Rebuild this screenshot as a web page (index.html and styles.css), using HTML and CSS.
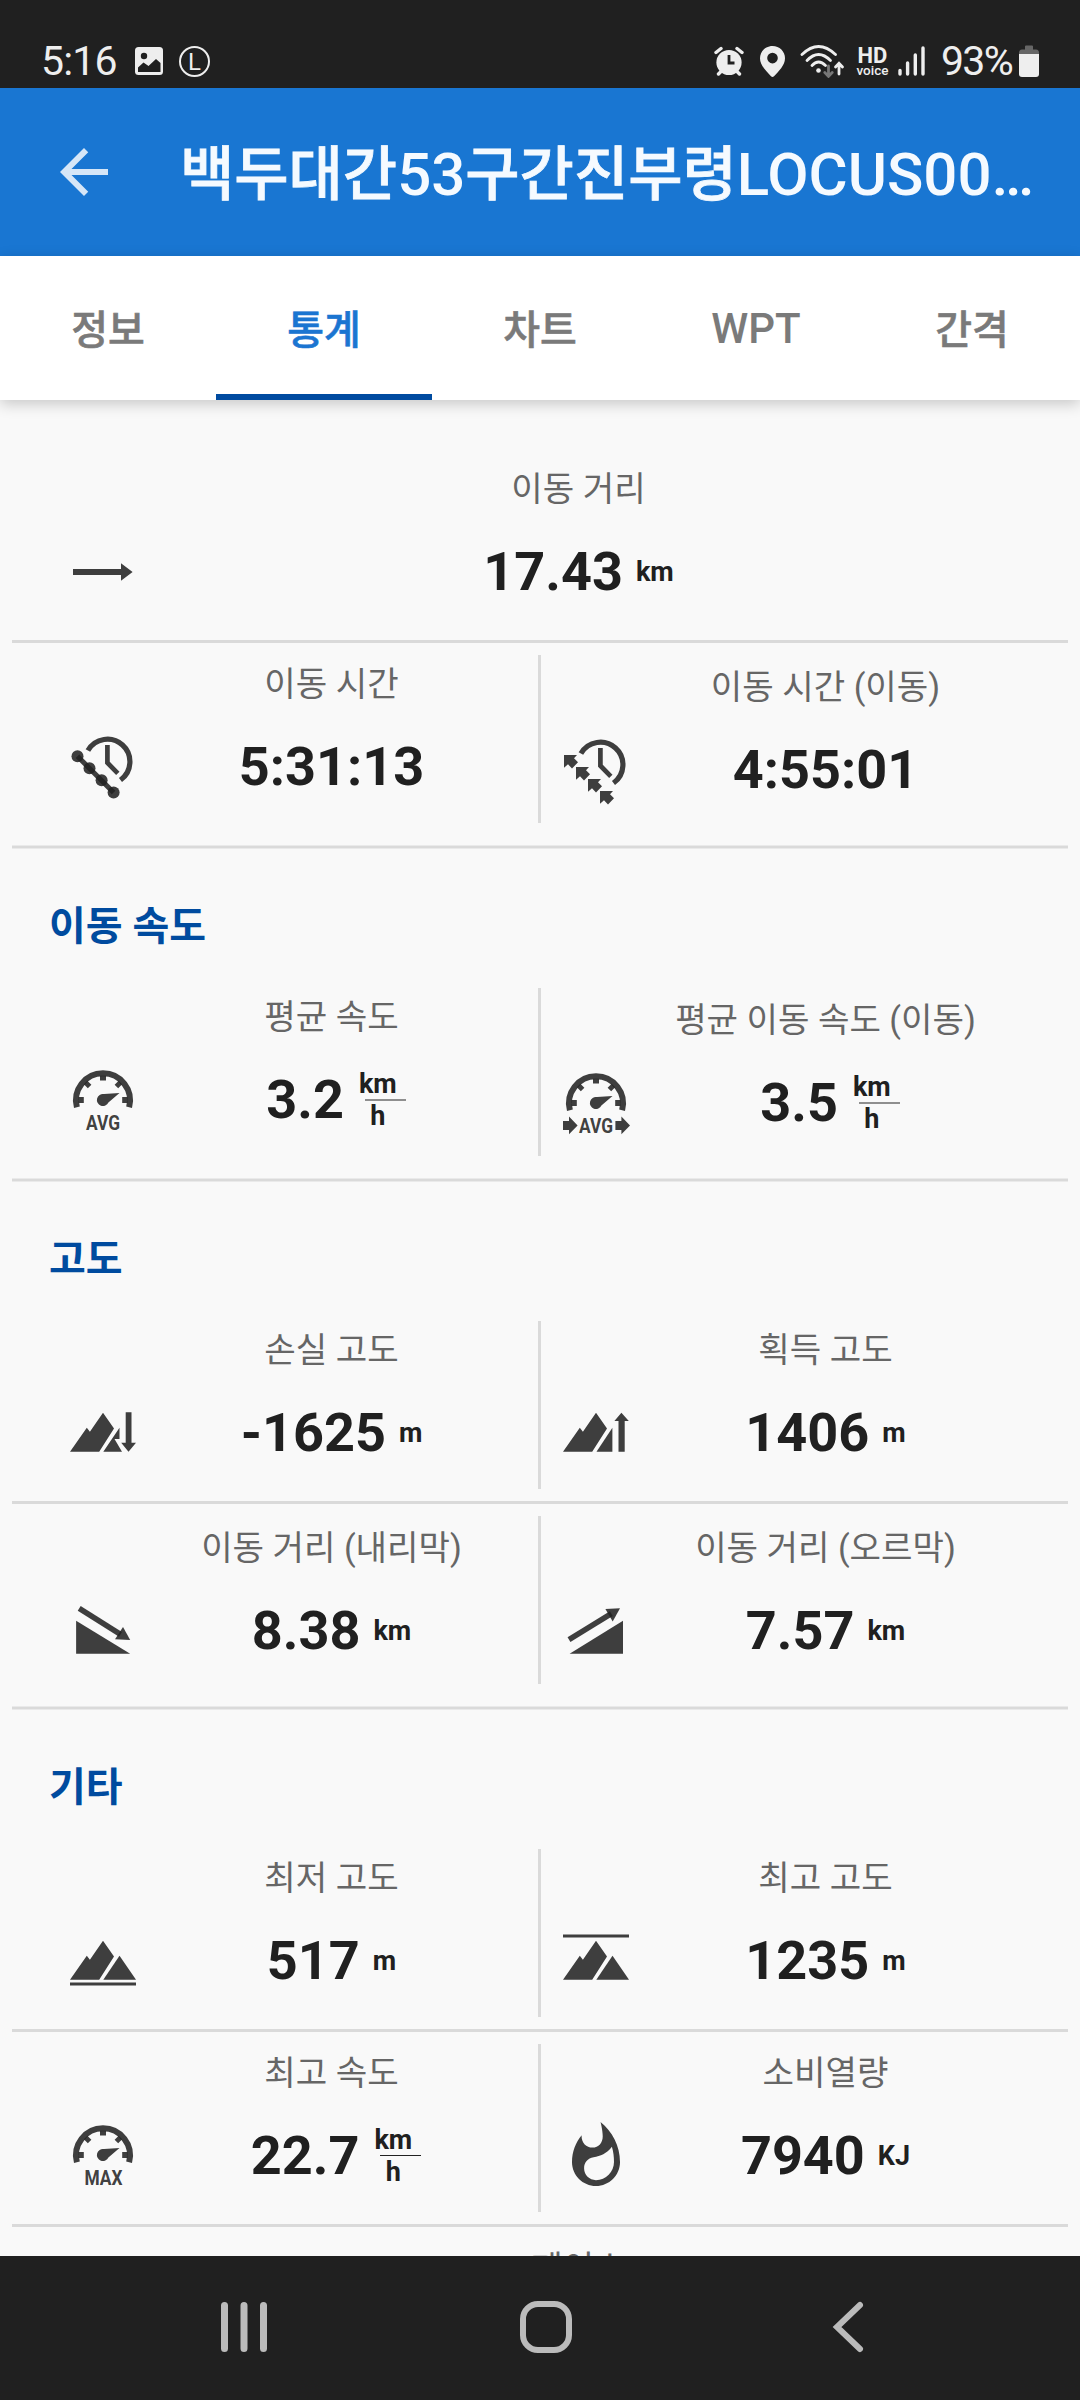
FILE: index.html
```html
<!DOCTYPE html>
<html lang="ko">
<head>
    <meta charset="UTF-8">
    <meta name="viewport" content="width=device-width, initial-scale=1.0">
    <title>통계</title>
    <link rel="stylesheet" href="styles.css">
</head>
<body>
    <!-- 공통 아이콘 -->
    <svg class="defs" width="0" height="0">
        <defs>
            <g id="clock">
                <path class="line" stroke-width="5.2" d="M20.9 19.5A22.5 22.5 0 1 1 53.5 49"/>
                <path class="line" stroke-width="4.7" d="M40.4 14V31.7L50.8 42.4"/>
            </g>
            <g id="gauge">
                <path class="line" stroke-width="6" d="M9.9 43.2A27 27 0 1 1 62.1 43.2"/>
                <path d="M33 11.8h6v4.8h-6zM11.6 33h5.2v6h-5.2zM55.2 33h5.2v6h-5.2z"/>
                <path class="line" stroke-width="5" d="M18.6 18.6L22.6 22.6M53.4 18.6L49.4 22.6"/>
                <path d="M52.5 29L41.4 38.4A6 6 0 1 1 37 30.1z"/>
            </g>
            <path id="peak" d="M3 54.7L19.8 30.7L22.9 34.7L36 15.7L47 31.4L32.2 54.7z"/>
            <path id="tip" d="M4 21H17L14 24.3L18 28.3L12 34.5L8 30.3L4 33.7z"/>
            <path id="arrow" d="M0 54h6v-4.4l8.6 8.8L6 67.2V63H0z"/>
        </defs>
    </svg>

    <header class="status">
        <div class="status-left">
            <span class="time">5:16</span>
            <svg class="ic-photo" width="28" height="28" viewBox="0 0 28 28"><rect width="28" height="28" rx="3.5" fill="#eee"/><circle cx="9" cy="9" r="3.2" fill="#202020"/><path d="M3 20.5L8.5 15.5L13.5 19L21 12L25.5 16V25H3z" fill="#202020"/></svg>
            <span class="ic-l">L</span>
        </div>
        <div class="status-right">
            <svg class="ic-alarm" width="30" height="30" viewBox="0 0 30 30"><circle cx="15" cy="16.5" r="12.6" fill="#eee"/><path d="M2 6.500L7 2.500M28 6.500L23 2.500M4.500 28L7.500 25M25.500 28L22.500 25" stroke="#eee" stroke-width="3.4" stroke-linecap="round"/><path d="M15 9V17H20.5" fill="none" stroke="#202020" stroke-width="2.8"/></svg>
            <svg class="ic-pin" width="25" height="31" viewBox="0 0 25 31"><path fill="#eee" fill-rule="evenodd" d="M12.5 0C5.5 0 0 5.5 0 12.3C0 19.5 6.5 25.5 11 30.3Q12.5 31.5 14 30.3C18.5 25.5 25 19.5 25 12.3C25 5.5 19.5 0 12.5 0zM12.5 6.8a5.3 5.3 0 1 1 0 10.6a5.3 5.3 0 1 1 0-10.6z"/></svg>
            <svg class="ic-wifi" width="46" height="34" viewBox="0 0 46 34"><g fill="none" stroke="#eee" stroke-width="2.8" stroke-linecap="round"><path d="M2 10.5Q18.5-5.5 35.5 10.5"/><path d="M7 16.5Q18.5 4.5 30.5 16.5"/><path d="M12 21.5Q18.5 14.5 25.5 21.5"/><path d="M39 30V20M35.5 23L39 19.2L42.5 23"/><path stroke="#777" d="M28.5 22V32M24.8 28.6L28.5 32.4L32.2 28.6"/></g><circle cx="18.5" cy="26.5" r="2.3" fill="#eee"/></svg>
            <span class="hd"><b>HD</b><small>voice</small></span>
            <svg class="ic-signal" width="28" height="30" viewBox="0 0 28 30"><path d="M2 24.5V28M9.6 17V28M17.3 9V28M25 2V28" stroke="#eee" stroke-width="3.4" stroke-linecap="round"/></svg>
            <span class="battery-text">93%</span>
            <svg class="ic-battery" width="20" height="33" viewBox="0 0 20 33"><path fill="#666" d="M6 1.5Q6 .5 7 .5H13Q14 .5 14 1.5V4.500H17Q20 4.500 20 8V12H0V8Q0 4.500 3 4.500H6z"/><path fill="#eee" d="M0 9H20V29Q20 32 17 32H3Q0 32 0 29z"/></svg>
        </div>
    </header>

    <div class="appbar">
        <svg class="back" width="72" height="72" viewBox="0 0 24 24"><path fill="#d6e6f7" d="M20 11H7.83l5.59-5.59L12 4l-8 8 8 8 1.41-1.41L7.83 13H20v-2z"/></svg>
        <h1><span>백두대간</span>53<span>구간진부령</span>LOCUS00…</h1>
    </div>

    <nav class="tabs">
        <a class="tab">정보</a>
        <a class="tab active">통계</a>
        <a class="tab">차트</a>
        <a class="tab latin">WPT</a>
        <a class="tab">간격</a>
    </nav>

    <main class="content">
        <div class="row">
            <div class="cell">
                <svg class="icon" viewBox="0 0 72 72"><path d="M6 33H54V27.3L65.6 36L54 44.7V39H6z"/></svg>
                <div class="stat">
                    <div class="label">이동 거리</div>
                    <div class="value">17.43<span class="unit">km</span></div>
                </div>
            </div>
        </div>
        <div class="divider"></div>
        <div class="row">
            <div class="cell">
                <svg class="icon" viewBox="0 0 72 72"><use href="#clock"/><circle cx="10.5" cy="25.3" r="6"/><circle cx="22.5" cy="37.3" r="6"/><circle cx="34.6" cy="49.3" r="6"/><circle cx="46.6" cy="61.5" r="6"/><path class="line" stroke-width="5" d="M10.5 25.3L46.6 61.5"/></svg>
                <div class="stat">
                    <div class="label">이동 시간</div>
                    <div class="value">5:31:13</div>
                </div>
            </div>
            <div class="split"></div>
            <div class="cell low">
                <svg class="icon" viewBox="0 0 72 72"><use href="#clock"/><use href="#tip"/><use href="#tip" x="12" y="12"/><use href="#tip" x="24" y="24"/><use href="#tip" x="36" y="36"/></svg>
                <div class="stat">
                    <div class="label">이동 시간 (이동)</div>
                    <div class="value">4:55:01</div>
                </div>
            </div>
        </div>
        <div class="divider section-end"></div>

        <h2>이동 속도</h2>
        <div class="row">
            <div class="cell">
                <svg class="icon" viewBox="0 0 72 72"><use href="#gauge"/><text x="19" y="66" textLength="34" lengthAdjust="spacingAndGlyphs">AVG</text></svg>
                <div class="stat">
                    <div class="label">평균 속도</div>
                    <div class="value">3.2<span class="unit frac"><span>km</span><span>h</span></span></div>
                </div>
            </div>
            <div class="split"></div>
            <div class="cell low">
                <svg class="icon" viewBox="0 0 72 72"><use href="#gauge"/><text x="19" y="66" textLength="34" lengthAdjust="spacingAndGlyphs">AVG</text><use href="#arrow" x="3"/><use href="#arrow" x="55.4"/></svg>
                <div class="stat">
                    <div class="label">평균 이동 속도 (이동)</div>
                    <div class="value">3.5<span class="unit frac"><span>km</span><span>h</span></span></div>
                </div>
            </div>
        </div>
        <div class="divider section-end"></div>

        <h2>고도</h2>
        <div class="row">
            <div class="cell">
                <svg class="icon" viewBox="0 0 72 72"><use href="#peak"/><path d="M36.3 54.7L52.5 30.7V42H47.5L55 54.7z"/><path d="M58.7 15.3H64.5V45.7H69L61.5 54.7L54.2 45.7H58.7z"/></svg>
                <div class="stat">
                    <div class="label">손실 고도</div>
                    <div class="value">-1625<span class="unit">m</span></div>
                </div>
            </div>
            <div class="split"></div>
            <div class="cell">
                <svg class="icon" viewBox="0 0 72 72"><use href="#peak"/><path d="M36.5 54.7L52.4 30.7V54.7z"/><path d="M58.5 54.7V24H54.4L61.4 15.7L68.8 24H64.7V54.7z"/></svg>
                <div class="stat">
                    <div class="label">획득 고도</div>
                    <div class="value">1406<span class="unit">m</span></div>
                </div>
            </div>
        </div>
        <div class="divider"></div>
        <div class="row">
            <div class="cell low">
                <svg class="icon" viewBox="0 0 72 72"><path d="M9.1 25.7V58.7H63.2z"/><path class="line" stroke-width="5.5" d="M12.2 13.3L53.5 39.3"/><path d="M56 32L63.2 45L48 44.3z"/></svg>
                <div class="stat">
                    <div class="label">이동 거리 (내리막)</div>
                    <div class="value">8.38<span class="unit">km</span></div>
                </div>
            </div>
            <div class="split"></div>
            <div class="cell low">
                <svg class="icon" viewBox="0 0 72 72"><path d="M63 25.7V58.7H9.6z"/><path class="line" stroke-width="5.5" d="M9 44.7L51.3 18.7"/><path d="M60 13.3L45.4 14L52.7 26.5z"/></svg>
                <div class="stat">
                    <div class="label">이동 거리 (오르막)</div>
                    <div class="value">7.57<span class="unit">km</span></div>
                </div>
            </div>
        </div>
        <div class="divider section-end"></div>

        <h2>기타</h2>
        <div class="row">
            <div class="cell">
                <svg class="icon" viewBox="0 0 72 72"><use href="#peak"/><path d="M36.3 54.7L52.5 30.7L69 54.7z"/><path d="M3 57.6H69V60.6H3z"/></svg>
                <div class="stat">
                    <div class="label">최저 고도</div>
                    <div class="value">517<span class="unit">m</span></div>
                </div>
            </div>
            <div class="split"></div>
            <div class="cell">
                <svg class="icon" viewBox="0 0 72 72"><use href="#peak"/><path d="M36.3 54.7L52.5 30.7L69 54.7z"/><path d="M3 9.5H69V12.5H3z"/></svg>
                <div class="stat">
                    <div class="label">최고 고도</div>
                    <div class="value">1235<span class="unit">m</span></div>
                </div>
            </div>
        </div>
        <div class="divider"></div>
        <div class="row">
            <div class="cell">
                <svg class="icon" viewBox="0 0 72 72"><use href="#gauge" y="-1"/><text x="17.4" y="65" textLength="38" lengthAdjust="spacingAndGlyphs">MAX</text></svg>
                <div class="stat">
                    <div class="label">최고 속도</div>
                    <div class="value">22.7<span class="unit frac thin"><span>km</span><span>h</span></span></div>
                </div>
            </div>
            <div class="split"></div>
            <div class="cell">
                <svg class="icon" viewBox="0 0 24 24"><path fill-rule="evenodd" d="M13.5.67s.74 2.65.74 4.8c0 2.06-1.35 3.73-3.41 3.73-2.07 0-3.63-1.67-3.63-3.73l.03-.36C5.21 7.51 4 10.62 4 14c0 4.42 3.58 8 8 8s8-3.58 8-8C20 8.61 17.41 3.8 13.5.67zM17.3 8.9C17.8 10.5 18 12.2 18 14C18 17.3 15.3 20.05 12 20.05C9.8 20.05 8.03 18.3 8.03 16.1C8.03 14 9.2 12.8 11.2 12.4C13.5 12 15.5 11.2 17.3 8.9z"/></svg>
                <div class="stat">
                    <div class="label">소비열량</div>
                    <div class="value">7940<span class="unit">KJ</span></div>
                </div>
            </div>
        </div>
        <div class="divider"></div>
        <div class="row">
            <div class="cell">
                <div class="icon"></div>
                <div class="stat">
                    <div class="label">페이스</div>
                </div>
            </div>
        </div>
    </main>

    <footer class="navbar">
        <svg width="50" height="54" viewBox="0 0 50 54"><path d="M5.5 5.5V48.5M25 5.5V48.5M44.5 5.5V48.5" stroke="#bbb" stroke-width="7" stroke-linecap="round"/></svg>
        <svg width="54" height="54" viewBox="0 0 54 54"><rect x="4" y="4" width="46" height="46" rx="15" fill="none" stroke="#bbb" stroke-width="6"/></svg>
        <svg width="54" height="54" viewBox="0 0 54 54"><path d="M39 5L16 27L39 49" fill="none" stroke="#bbb" stroke-width="6" stroke-linecap="round"/></svg>
    </footer>
</body>
</html>
```

FILE: styles.css
```css
html, body {
    height: 100%;
    margin: 0;
    padding: 0;
}
body {
    width: 1080px;
    height: 2400px;
    display: flex;
    flex-direction: column;
    overflow: hidden;
    background-color: #f9f9f9;
    font-family: Roboto, "Noto Sans CJK KR", sans-serif;
    color: #202020;
}
.defs {
    position: absolute;
}

/* 상태 표시줄 */
.status {
    flex: none;
    height: 88px;
    box-sizing: border-box;
    padding: 34px 41px 0 41px;
    display: flex;
    justify-content: space-between;
    background-color: #202020;
    color: #eee;
}
.status-left, .status-right {
    display: flex;
    align-items: center;
    height: 54px;
}
.time, .battery-text {
    font-size: 41px;
    line-height: 54px;
    letter-spacing: -0.8px;
}
.ic-photo {
    margin-left: 18px;
}
.ic-l {
    width: 31px;
    height: 31px;
    box-sizing: border-box;
    margin-left: 16px;
    border: 2px solid #eee;
    border-radius: 50%;
    font-size: 24px;
    line-height: 28px;
    text-align: center;
}
.ic-pin {
    margin-left: 16px;
}
.ic-wifi {
    margin-left: 15px;
}
.hd {
    display: flex;
    flex-direction: column;
    align-items: center;
    width: 33px;
    margin-left: 10px;
}
.hd b {
    font-size: 22px;
    font-weight: 700;
    line-height: 17px;
}
.hd small {
    font-size: 13.5px;
    font-weight: 500;
    line-height: 12px;
}
.ic-signal {
    margin-left: 9px;
}
.battery-text {
    margin-left: 15px;
    letter-spacing: -1.7px;
}
.ic-battery {
    margin-left: 7px;
}

/* 앱바 */
.appbar {
    flex: none;
    height: 168px;
    display: flex;
    align-items: center;
    padding-left: 48px;
    background-color: #1976d2;
}
.appbar h1 {
    margin: 0;
    padding: 5px 0 0 60px;
    font-size: 60px;
    font-weight: 500;
    line-height: 84px;
    white-space: nowrap;
    color: #f5faff;
}
.appbar h1 span {
    font-size: 59px;
    -webkit-text-stroke: 0.8px #f5faff;
}

/* 탭 */
.tabs {
    flex: none;
    position: relative;
    z-index: 1;
    display: flex;
    height: 144px;
    background-color: #fff;
    box-shadow: 0 4px 14px rgba(0, 0, 0, 0.2);
}
.tab {
    flex: 1;
    box-sizing: border-box;
    border-bottom: 6px solid transparent;
    font-size: 40px;
    font-weight: 500;
    line-height: 149px;
    text-align: center;
    color: #7a7a7a;
    -webkit-text-stroke: 0.6px;
}
.tab.latin {
    font-size: 42px;
    line-height: 146px;
    -webkit-text-stroke: 0;
}
.tab.active {
    color: #1b75d1;
    border-bottom-color: #004ba0;
}

/* 통계 목록 */
.content {
    flex: 1;
    min-height: 0;
    padding-top: 48px;
    overflow: hidden;
}
.content h2 {
    height: 127px;
    margin: 0;
    padding-left: 49px;
    font-size: 40px;
    font-weight: 700;
    line-height: 155px;
    color: #004b9f;
}
.row {
    display: flex;
    height: 192px;
    padding: 0 61px 0 66px;
}
.cell {
    flex: 1;
    display: flex;
}
.cell.low {
    padding-top: 3px;
}
.icon {
    flex: none;
    width: 72px;
    height: 72px;
    margin-top: 88px;
    fill: rgba(33, 33, 33, 0.87);
}
.cell:first-child .icon {
    margin-left: 1px;
    margin-right: -1px;
}
.line {
    fill: none;
    stroke: rgba(33, 33, 33, 0.87);
}
.icon text {
    font-size: 21px;
    font-weight: 700;
}
.stat {
    flex: 1;
    text-align: center;
}
.label {
    height: 72px;
    padding-top: 16px;
    font-size: 34.2px;
    line-height: 50px;
    white-space: nowrap;
    color: #666;
}
.value {
    display: flex;
    justify-content: center;
    align-items: center;
    height: 72px;
    font-size: 54px;
    font-weight: 700;
    line-height: 72px;
}
.unit {
    margin-left: 13px;
    font-size: 27px;
    line-height: 32px;
}
.frac {
    position: relative;
    display: flex;
    flex-direction: column;
    align-items: center;
    margin-left: 15px;
}
.frac::after {
    content: "";
    position: absolute;
    left: 6px;
    top: 31px;
    width: 41px;
    height: 2px;
    background-color: #8f8f8f;
}
.frac.thin::after {
    height: 1px;
    background-color: #222;
}
.split {
    width: 3px;
    height: 168px;
    margin: 12px 19px 0 13px;
    background-color: #dadada;
}
.divider {
    height: 3px;
    margin: 0 12px;
    background-color: #dadada;
}
.divider.section-end {
    height: 2px;
    margin-top: 10px;
    border: solid #eaeaea;
    border-width: 1px 0;
}

/* 하단 내비게이션 */
.navbar {
    flex: none;
    height: 144px;
    box-sizing: border-box;
    padding: 0 81px 2px 93px;
    display: flex;
    align-items: center;
    background-color: #202020;
}
.navbar svg {
    flex: 1;
}
```
